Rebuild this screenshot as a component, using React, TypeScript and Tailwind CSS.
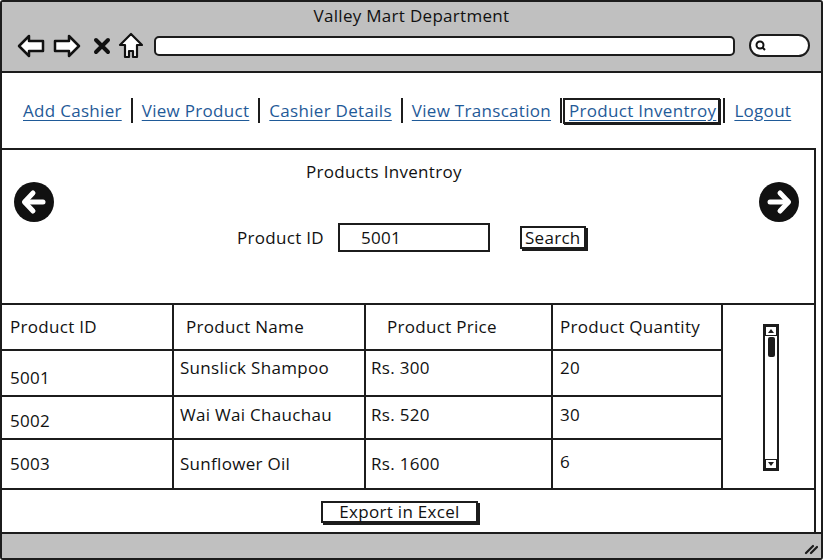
import React from 'react';

const navLinks = ['Add Cashier', 'View Product', 'Cashier Details', 'View Transcation', 'Product Inventroy', 'Logout'];

const rows = [
  { id: '5001', name: 'Sunslick Shampoo', price: 'Rs. 300', qty: '20', h: 'h-[46px]', idPad: 'pt-[17px]', pad: 'pt-[7px]', qtyPad: 'pt-[7px]' },
  { id: '5002', name: 'Wai Wai Chauchau', price: 'Rs. 520', qty: '30', h: 'h-[43px]', idPad: 'pt-[14px]', pad: 'pt-[8px]', qtyPad: 'pt-[8px]' },
  { id: '5003', name: 'Sunflower Oil', price: 'Rs. 1600', qty: '6', h: 'h-[48px]', idPad: 'pt-[14px]', pad: 'pt-[14px]', qtyPad: 'pt-[12px]' },
];

const CircleArrow: React.FC<{ dir: 'left' | 'right' }> = ({ dir }) => (
  <svg width="40" height="40" viewBox="0 0 40 40">
    <circle cx="20" cy="20" r="20" fill="#111" />
    <g transform={dir === 'right' ? 'rotate(180 20 20)' : undefined} stroke="#fff" strokeWidth="5" strokeLinecap="round" strokeLinejoin="round" fill="none">
      <path d="M11 20 H29" />
      <path d="M19 11 L10.5 20 L19 29" />
    </g>
  </svg>
);

const BrowserIcons: React.FC = () => (
  <div className="flex items-center">
    <svg width="28" height="24" viewBox="0 0 28 24" className="ml-[15px]">
      <path d="M2 12 L12 2 L12 7 L26 7 L26 17 L12 17 L12 22 Z" fill="#fff" stroke="#111" strokeWidth="2.5" strokeLinejoin="round" />
    </svg>
    <svg width="28" height="24" viewBox="0 0 28 24" className="ml-[8px]">
      <path d="M26 12 L16 2 L16 7 L2 7 L2 17 L16 17 L16 22 Z" fill="#fff" stroke="#111" strokeWidth="2.5" strokeLinejoin="round" />
    </svg>
    <svg width="18" height="18" viewBox="0 0 18 18" className="ml-[12px]">
      <path d="M3 3 L15 15 M15 3 L3 15" stroke="#111" strokeWidth="4" strokeLinecap="round" />
    </svg>
    <svg width="26" height="27" viewBox="0 0 26 27" className="ml-[7px]">
      <path d="M13 2 L24 13 L19 13 L19 25 L15 25 L15 19 L11 19 L11 25 L7 25 L7 13 L2 13 Z" fill="#fff" stroke="#111" strokeWidth="2.2" strokeLinejoin="round" />
    </svg>
  </div>
);

export default function App() {
  return (
    <div className="w-[823px] h-[560px] border-2 border-[#1c1c1c] rounded-[3px] bg-white flex flex-col text-[#111] font-['Open_Sans',sans-serif] text-[17px] tracking-[0.3px] overflow-hidden">
      {/* title bar */}
      <div className="h-[71px] bg-[#c0c0c0] border-b-2 border-[#1c1c1c] flex flex-col shrink-0">
        <div className="text-center leading-[20px] pt-[4px]">Valley Mart Department</div>
        <div className="flex items-center mt-[6px]">
          <BrowserIcons />
          <div className="ml-[10px] w-[581px] h-[20px] bg-white border-2 border-[#1c1c1c] rounded-[5px]" />
          <div className="ml-[14px] w-[61px] h-[23px] bg-white border-2 border-[#1c1c1c] rounded-full flex items-center pl-[4px]">
            <svg width="11" height="11" viewBox="0 0 11 11">
              <circle cx="5" cy="5" r="3.5" fill="none" stroke="#111" strokeWidth="2" />
              <path d="M7.5 7.5 L10 10" stroke="#111" strokeWidth="2" />
            </svg>
          </div>
        </div>
      </div>

      {/* navigation */}
      <div className="h-[75px] shrink-0 flex items-center pl-[21px]">
        {navLinks.map((link, i) => (
          <React.Fragment key={link}>
            {i > 0 && <div className="w-[2px] h-[25px] bg-[#1c1c1c] mx-[9px]" />}
            {link === 'Product Inventroy' ? (
              <span className="-ml-[8px] -mr-[6px] border-2 border-[#1c1c1c] shadow-[1px_1px_0_#1c1c1c] pl-[4px] pr-[2px] py-[1px] text-[#1f5a98] underline underline-offset-[3px] leading-[20px]">
                {link}
              </span>
            ) : (
              <span className="text-[#1f5a98] underline underline-offset-[3px] leading-[20px]">{link}</span>
            )}
          </React.Fragment>
        ))}
      </div>

      {/* main panel */}
      <div className="flex-1 border-t-2 border-r-2 border-[#1c1c1c] mr-[5px] flex flex-col leading-[20px]">
        <div className="h-[153px] shrink-0 flex">
          <div className="pl-[12px] pt-[32px]">
            <CircleArrow dir="left" />
          </div>
          <div className="flex-1 flex flex-col">
            <div className="pl-[252px] pt-[12px]">Products Inventroy</div>
            <div className="flex items-center pl-[183px] mt-[41px]">
              <span>Product ID</span>
              <div className="ml-[14px] w-[152px] h-[29px] border-2 border-[#1c1c1c] flex items-center pl-[21px]">5001</div>
              <button className="ml-[30px] h-[23px] px-[3px] bg-white border-2 border-[#1c1c1c] shadow-[2px_2px_0_#1c1c1c] leading-[18px]">
                Search
              </button>
            </div>
          </div>
          <div className="pr-[15px] pt-[32px]">
            <CircleArrow dir="right" />
          </div>
        </div>

        {/* table */}
        <div className="flex border-t-2 border-b-2 border-[#1c1c1c] h-[187px] shrink-0">
          <div className="w-[721px] flex flex-col">
            <div className="flex h-[46px] border-b-2 border-[#1c1c1c]">
              <div className="w-[172px] border-r-2 border-[#1c1c1c] pl-[8px] flex items-center">Product ID</div>
              <div className="w-[192px] border-r-2 border-[#1c1c1c] pl-[12px] flex items-center">Product Name</div>
              <div className="w-[187px] border-r-2 border-[#1c1c1c] pl-[21px] flex items-center">Product Price</div>
              <div className="w-[170px] border-r-2 border-[#1c1c1c] pl-[7px] flex items-center">Product Quantity</div>
            </div>
            {rows.map((r, i) => (
              <div key={r.id} className={`flex ${r.h} ${i < rows.length - 1 ? 'border-b-2 border-[#1c1c1c]' : ''}`}>
                <div className={`w-[172px] border-r-2 border-[#1c1c1c] pl-[8px] ${r.idPad}`}>{r.id}</div>
                <div className={`w-[192px] border-r-2 border-[#1c1c1c] pl-[6px] ${r.pad}`}>{r.name}</div>
                <div className={`w-[187px] border-r-2 border-[#1c1c1c] pl-[5px] ${r.pad}`}>{r.price}</div>
                <div className={`w-[170px] border-r-2 border-[#1c1c1c] pl-[7px] ${r.qtyPad}`}>{r.qty}</div>
              </div>
            ))}
          </div>
          <div className="flex-1 pl-[40px] pt-[19px]">
            <div className="w-[16px] h-[147px] border-2 border-[#1c1c1c] bg-white flex flex-col items-center">
              <svg width="12" height="10" viewBox="0 0 12 10" className="shrink-0">
                <rect x="0.5" y="0.5" width="11" height="9" fill="#fff" stroke="#1c1c1c" />
                <path d="M3 7 L6 3 L9 7 Z" fill="#1c1c1c" />
              </svg>
              <div className="w-[7px] h-[20px] bg-[#1c1c1c] rounded-[2px] mt-[1px]" />
              <div className="flex-1" />
              <svg width="12" height="10" viewBox="0 0 12 10" className="shrink-0">
                <rect x="0.5" y="0.5" width="11" height="9" fill="#fff" stroke="#1c1c1c" />
                <path d="M3 3 L6 7 L9 3 Z" fill="#1c1c1c" />
              </svg>
            </div>
          </div>
        </div>

        <div className="flex-1 pl-[319px] pt-[11px]">
          <button className="w-[157px] h-[22px] bg-white border-2 border-[#1c1c1c] shadow-[2px_2px_0_#1c1c1c] leading-[18px]">
            Export in Excel
          </button>
        </div>
      </div>

      {/* status bar */}
      <div className="h-[26px] shrink-0 bg-[#c0c0c0] border-t-2 border-[#1c1c1c] flex justify-end items-end pr-[3px] pb-[3px]">
        <svg width="14" height="14" viewBox="0 0 14 14">
          <path d="M2 12 L9 5 M7 12 L13 6" stroke="#1c1c1c" strokeWidth="2.2" strokeLinecap="round" />
        </svg>
      </div>
    </div>
  );
}
